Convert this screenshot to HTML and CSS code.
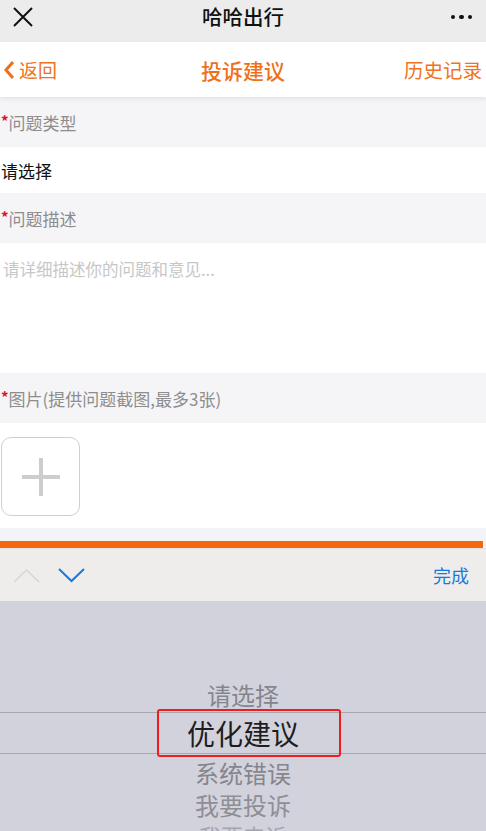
FILE: index.html
```html
<!DOCTYPE html>
<html lang="zh-CN">
<head>
<meta charset="utf-8">
<title>哈哈出行</title>
<link rel="stylesheet" href="styles.css">
</head>
<body>
<div class="page">
  <header class="wx-bar">
    <svg class="wx-close" width="20" height="20" viewBox="0 0 20 20"><path d="M1 1 L19 19 M19 1 L1 19" stroke="#111" stroke-width="2" fill="none"/></svg>
    <div class="wx-title">哈哈出行</div>
    <div class="wx-more"><span></span><span></span><span></span></div>
  </header>
  <nav class="nav">
    <div class="nav-back">
      <svg width="12" height="20" viewBox="0 0 12 20"><path d="M10 2 L3 10 L10 18" stroke="#ef6f1a" stroke-width="3" fill="none" stroke-linejoin="miter"/></svg>
      <span>返回</span>
    </div>
    <div class="nav-title">投诉建议</div>
    <div class="nav-history">历史记录</div>
  </nav>
  <main class="form">
    <div class="label-row"><span class="req">*</span>问题类型</div>
    <div class="select-row">请选择</div>
    <div class="label-row"><span class="req">*</span>问题描述</div>
    <div class="text-area">请详细描述你的问题和意见...</div>
    <div class="label-row"><span class="req">*</span>图片(提供问题截图,最多3张)</div>
    <div class="upload-row">
      <div class="upload-box">
        <svg width="40" height="40" viewBox="0 0 40 40"><path d="M20 1 V39 M1 20 H39" stroke="#cdcdcd" stroke-width="4" fill="none"/></svg>
      </div>
    </div>
    <div class="submit-gap"><div class="submit-bar"></div></div>
  </main>
  <div class="kb-toolbar">
    <div class="kb-arrows">
      <svg width="27" height="15" viewBox="0 0 27 15"><path d="M1 14 L13.5 2 L26 14" stroke="#d6d6d6" stroke-width="1.6" fill="none"/></svg>
      <svg width="27" height="15" viewBox="0 0 27 15"><path d="M1 1 L13.5 13 L26 1" stroke="#1479e0" stroke-width="2" fill="none"/></svg>
    </div>
    <div class="kb-done">完成</div>
  </div>
  <div class="picker">
    <div class="pick-item pick-1">请选择</div>
    <div class="pick-selected">优化建议</div>
    <div class="pick-item pick-3">系统错误</div>
    <div class="pick-item pick-4">我要投诉</div>
    <div class="pick-item pick-5">我要申诉</div>
    <div class="highlight"></div>
  </div>
</div>
</body>
</html>
```
FILE: styles.css
```css
* { box-sizing: border-box; }
html, body { margin: 0; padding: 0; }
body {
  width: 486px;
  height: 831px;
  overflow: hidden;
  font-family: "Noto Sans CJK SC", "Noto Sans", sans-serif;
  background: #ffffff;
}
.page { display: flex; flex-direction: column; width: 486px; height: 831px; overflow: hidden; }

.wx-bar {
  height: 42px;
  background: #ececec;
  display: flex;
  align-items: center;
  justify-content: space-between;
  padding: 0 14px 0 13px;
  position: relative;
}
.wx-close { display: block; margin-top: -8px; }
.wx-title {
  position: absolute;
  left: 0; right: 0;
  text-align: center;
  font-size: 20.5px;
  font-weight: 500;
  line-height: 24px;
  top: 4px;
  color: #111;
  pointer-events: none;
}
.wx-more { display: flex; gap: 4px; margin-top: -8px; }
.wx-more span { width: 4.5px; height: 4.5px; border-radius: 50%; background: #111; display: block; }

.nav {
  height: 55px;
  background: #fff;
  display: flex;
  align-items: center;
  justify-content: space-between;
  padding: 0 4px 0 3px;
  position: relative;
  z-index: 2;
  box-shadow: 0 2px 5px rgba(0,0,0,0.08);
  color: #ee7421;
}
.nav-back { display: flex; align-items: center; gap: 4px; font-size: 19px; line-height: 24px; }
.nav-back svg { display: block; }
.nav-title {
  position: absolute;
  left: 0; right: 0;
  text-align: center;
  font-size: 21px;
  font-weight: 500;
  line-height: 24px;
  color: #f0701a;
  pointer-events: none;
}
.nav-history { font-size: 19.5px; line-height: 24px; }

.form { display: flex; flex-direction: column; }
.label-row {
  height: 50px;
  background: #f5f5f8;
  display: flex;
  align-items: center;
  padding-left: 1px;
  font-size: 17px;
  color: #8d8d8d;
}
.req { color: #e0141e; font-size: 15px; font-weight: 700; margin-right: 0; margin-top: -4px; }
.select-row {
  height: 46px;
  background: #fff;
  display: flex;
  align-items: center;
  padding-left: 1px;
  font-size: 17px;
  color: #111;
}
.text-area {
  height: 130px;
  background: #fff;
  padding: 14px 0 0 3px;
  font-size: 16.5px;
  line-height: 24px;
  color: #c7c7c7;
}
.upload-row {
  height: 105px;
  background: #fff;
  padding: 14px 0 0 1px;
}
.upload-box {
  width: 79px;
  height: 79px;
  border: 1px solid #cfcfcf;
  border-radius: 10px;
  display: flex;
  align-items: center;
  justify-content: center;
}
.upload-box svg { display: block; }
.submit-gap {
  height: 20px;
  background: #f3f4f7;
  padding-top: 13px;
}
.submit-bar { height: 7px; width: 483px; background: #f3680d; }

.kb-toolbar {
  height: 53px;
  background: #efedeb;
  display: flex;
  align-items: center;
  justify-content: space-between;
  padding: 0 17px 0 13px;
  border-top: 1px solid #e4e2e0;
}
.kb-arrows { display: flex; align-items: center; gap: 18px; }
.kb-arrows svg { display: block; }
.kb-done { font-size: 18px; color: #1479e0; line-height: 24px; }

.picker {
  flex: 1;
  background: #d2d2dd;
  position: relative;
  padding-top: 76px;
  display: flex;
  flex-direction: column;
  align-items: stretch;
  text-align: center;
  overflow: hidden;
}
.pick-item {
  color: #85858c;
  font-size: 24px;
  line-height: 1;
  display: flex;
  align-items: center;
  justify-content: center;
  flex-shrink: 0;
}
.pick-1 { height: 35px; }
.pick-selected {
  height: 42px;
  flex-shrink: 0;
  border-top: 1px solid #a8a8b0;
  border-bottom: 1px solid #a8a8b0;
  display: flex;
  align-items: center;
  justify-content: center;
  font-size: 28px;
  line-height: 1;
  color: #1e1e22;
}
.pick-3 { height: 37px; }
.pick-4 { height: 29px; font-size: 24px; color: #8e8e95; align-items: flex-start; padding-top: 2px; }
.pick-5 { height: 22px; font-size: 22px; color: #a4a4ad; align-items: flex-start; padding-top: 4px; }
.highlight {
  position: absolute;
  left: 157px;
  top: 108px;
  width: 184px;
  height: 48px;
  border: 2px solid #f21c1c;
  border-radius: 3px;
}
```
